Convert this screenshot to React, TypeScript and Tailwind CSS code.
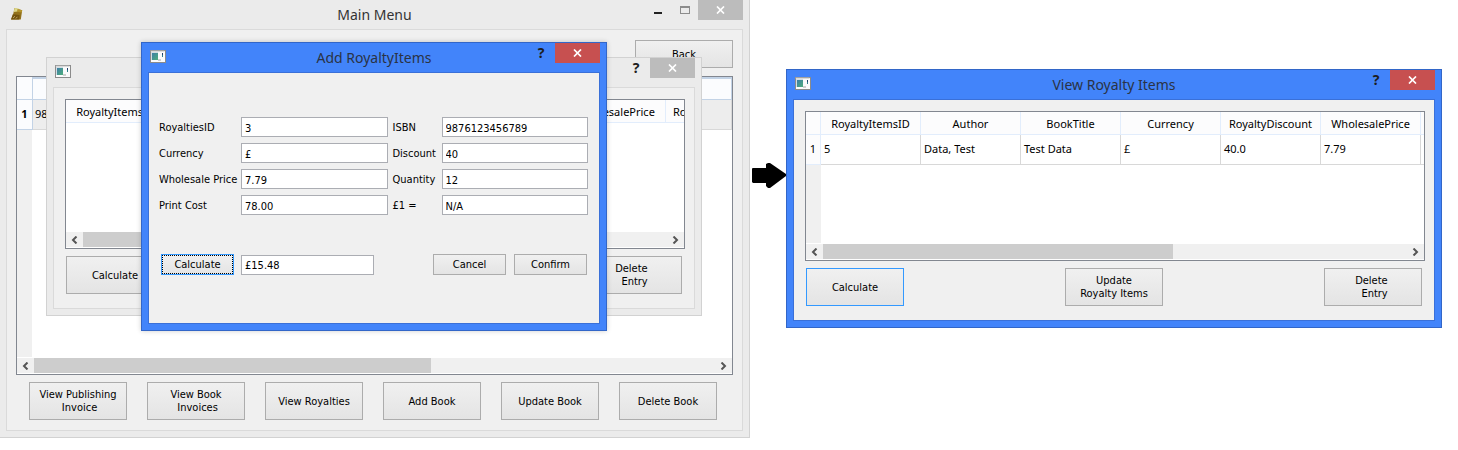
import React, { ReactNode } from 'react';

const COLUMNS = ['RoyaltyItemsID', 'Author', 'BookTitle', 'Currency', 'RoyaltyDiscount', 'WholesalePrice'];

function WindowIcon() {
  return (
    <svg width="16" height="13" viewBox="0 0 16 13" className="shrink-0" aria-hidden="true">
      <defs>
        <linearGradient id="pane" x1="0" y1="0" x2="1" y2="1">
          <stop offset="0" stopColor="#3d7ea6" />
          <stop offset="1" stopColor="#4fae7c" />
        </linearGradient>
      </defs>
      <rect x="0.5" y="0.5" width="15" height="12" fill="#fbfbfb" stroke="#8b8b8b" />
      <rect x="0.5" y="0.5" width="14" height="1" fill="#b9b9b9" />
      <rect x="1" y="2" width="7" height="8" fill="#d3dde4" />
      <rect x="2" y="3" width="6" height="7" fill="url(#pane)" />
      <rect x="8" y="9" width="3" height="2" fill="#d0d0d0" />
      <rect x="12" y="3" width="1" height="4" fill="#2f7f8c" />
      <rect x="12" y="3" width="1" height="2" fill="#23406e" />
    </svg>
  );
}

function AppIcon() {
  return (
    <svg width="14" height="14" viewBox="0 0 14 14" className="shrink-0" aria-hidden="true">
      <path d="M4.5 1 12.2 3.2 10.8 12.6 1 12.6 3 8Z" fill="#93721c" />
      <path d="M4.6 1 9 1.4 7.5 4.5 3.6 5Z" fill="#dcd88a" />
      <path d="M7.5 2 12.2 3.2 11.8 5.5 7 4.8Z" fill="#b4942c" />
      <path d="M2.8 7.2 9.6 8 9.2 12.6 1 12.6Z" fill="#74540f" />
      <path d="M3 11 5 9.2M5.8 11.6 7.4 9.8" stroke="#cdb878" strokeWidth="0.8" />
    </svg>
  );
}

function Cross() {
  return (
    <svg width="9" height="8" viewBox="0 0 9 8" aria-hidden="true">
      <path d="M1 0.5 8 7.5M8 0.5 1 7.5" stroke="#fff" strokeWidth="1.7" />
    </svg>
  );
}

function CloseButton({ active }: { active: boolean }) {
  return (
    <button
      aria-label="Close"
      className={`flex h-5 w-[45px] items-center justify-center ${active ? 'bg-[#c75050]' : 'bg-[#bcbcbc]'}`}
    >
      <Cross />
    </button>
  );
}

function DialogWindow({ title, active, children }: { title: string; active: boolean; children: ReactNode }) {
  return (
    <section
      className={`flex h-full flex-col border px-[6px] pb-[6px] ${
        active ? 'border-[#3266c8] bg-[#4284fa]' : 'border-[#d2d2d2] bg-[#ebebeb]'
      }`}
    >
      <header className="relative flex h-[29px] items-start justify-between pl-[2px]">
        <div className="pt-[7px]">
          <WindowIcon />
        </div>
        <h2 className="absolute inset-x-0 top-[5px] text-center font-['Noto_Sans',sans-serif] text-[14px] leading-5 text-[#2a3345]">
          {title}
        </h2>
        <div className="relative flex">
          <button
            aria-label="Help"
            className="h-5 w-7 font-['Noto_Sans',sans-serif] text-[14px] leading-5 font-bold text-[#1d1d1d]"
          >
            ?
          </button>
          <CloseButton active={active} />
        </div>
      </header>
      <div
        className={`flex min-h-0 flex-1 flex-col border bg-[#f0f0f0] ${
          active ? 'border-[#3a70d8]' : 'border-[#dadada]'
        }`}
      >
        {children}
      </div>
    </section>
  );
}

function PushButton({ children, focused = false }: { children: ReactNode; focused?: boolean }) {
  return (
    <button
      className={`flex h-[38px] w-[98px] shrink-0 items-center justify-center border bg-linear-to-b from-[#f0f0f0] to-[#e4e4e4] text-center text-[11px] leading-[13px] whitespace-pre ${
        focused ? 'border-[#3399ff]' : 'border-[#acacac]'
      }`}
    >
      {children}
    </button>
  );
}

function SmallButton({ children, focused = false }: { children: ReactNode; focused?: boolean }) {
  return (
    <button
      className={`h-[21px] w-[73px] shrink-0 border bg-linear-to-b from-[#f0f0f0] to-[#e4e4e4] pt-px text-[11px] leading-4 ${
        focused ? 'border-[#3399ff] outline-1 -outline-offset-2 outline-dotted outline-black' : 'border-[#acacac]'
      }`}
    >
      {children}
    </button>
  );
}

function Chevron({ right = false }: { right?: boolean }) {
  return (
    <svg width="7" height="8" viewBox="0 0 7 8" aria-hidden="true">
      <path d={right ? 'M1.5 0.5 5 4 1.5 7.5' : 'M5.5 0.5 2 4 5.5 7.5'} fill="none" stroke="#555" strokeWidth="2" />
    </svg>
  );
}

function ScrollBar({ thumb }: { thumb: 'w-3/5' | 'w-7/12' }) {
  return (
    <div className="mb-px flex h-[15px] shrink-0 bg-[#f0f0f0]">
      <button aria-label="Scroll left" className="flex w-[17px] items-center justify-center">
        <Chevron />
      </button>
      <div className="flex flex-1">
        <div className={`${thumb} bg-[#cdcdcd]`} />
      </div>
      <button aria-label="Scroll right" className="flex w-[17px] items-center justify-center">
        <Chevron right />
      </button>
    </div>
  );
}

function RoyaltyTable({ row }: { row?: string[] }) {
  return (
    <div className="flex h-[150px] flex-col border border-[#828790] bg-white font-['Noto_Sans',sans-serif] text-[11px]">
      <div
        className={`mb-px flex min-h-0 flex-1 overflow-hidden ${
          row ? 'bg-linear-to-r from-[#f0f0f0] from-[15px] to-white to-[15px]' : ''
        }`}
      >
        <table className="w-[716px] shrink-0 table-fixed border-separate border-spacing-0 self-start">
          <thead>
            <tr className="h-[23px]">
              {row && <th className="w-[15px] border-r border-b border-[#e2edfc] bg-[#fcfcfd]" />}
              {COLUMNS.map((name) => (
                <th
                  key={name}
                  className="w-[100px] border-r border-b border-[#e2edfc] bg-[#fcfcfd] p-0 pt-px text-center leading-4 font-normal"
                >
                  {name}
                </th>
              ))}
              <th className="border-b border-[#e2edfc] bg-[#fcfcfd] p-0 pt-px pl-[7px] text-left leading-4 font-normal">
                {row ? '' : 'Ro'}
              </th>
            </tr>
          </thead>
          {row && (
            <tbody>
              <tr className="h-[30px]">
                <th className="border-r border-b border-[#e2edfc] bg-[#fcfcfd] p-0 text-center font-normal">1</th>
                {row.map((cell) => (
                  <td key={cell} className="border-r border-b border-[#d8d8d8] bg-white p-0 pl-[3px]">
                    {cell}
                  </td>
                ))}
                <td className="border-b border-[#d8d8d8] bg-white" />
              </tr>
            </tbody>
          )}
        </table>
      </div>
      <ScrollBar thumb="w-3/5" />
    </div>
  );
}

function RoyaltyItemsWindow({ title, active, row }: { title: string; active: boolean; row?: string[] }) {
  return (
    <DialogWindow title={title} active={active}>
      <div className="pt-[11px] pr-[9px] pb-[7px] pl-[11px]">
        <RoyaltyTable row={row} />
      </div>
      <div className="flex justify-between pr-3 pb-[14px] pl-3">
        <PushButton focused={active}>Calculate</PushButton>
        <PushButton>{'Update\nRoyalty Items'}</PushButton>
        <PushButton>{'Delete \n Entry'}</PushButton>
      </div>
    </DialogWindow>
  );
}

const FIELDS = [
  ['RoyaltiesID', '3'],
  ['ISBN', '9876123456789'],
  ['Currency', '£'],
  ['Discount', '40'],
  ['Wholesale Price', '7.79'],
  ['Quantity', '12'],
  ['Print Cost', '78.00'],
  ['£1 =', 'N/A'],
];

const INPUT = 'h-5 min-w-0 border border-[#abadb3] bg-white px-[3px] pt-[2px] text-[11px] leading-4';

function AddRoyaltyItems() {
  return (
    <DialogWindow title="Add RoyaltyItems" active>
      <form className="flex flex-col" onSubmit={(e) => e.preventDefault()}>
        <div className="grid grid-cols-[77px_1fr_44px_1fr] items-center gap-x-[5px] gap-y-[6px] pt-11 pr-[11px] pl-[10px]">
          {FIELDS.map(([label, value]) => (
            <React.Fragment key={label}>
              <label htmlFor={label} className="pt-px text-[11px] leading-4 whitespace-nowrap">
                {label}
              </label>
              <input id={label} defaultValue={value} className={INPUT} />
            </React.Fragment>
          ))}
        </div>
        <div className="flex items-center justify-between pt-[39px] pr-3 pl-3">
          <div className="flex items-center gap-[7px]">
            <SmallButton focused>Calculate</SmallButton>
            <input aria-label="Royalty" defaultValue="£15.48" className={`${INPUT} w-[133px]`} />
          </div>
          <div className="flex gap-2">
            <SmallButton>Cancel</SmallButton>
            <SmallButton>Confirm</SmallButton>
          </div>
        </div>
      </form>
    </DialogWindow>
  );
}

function BooksTable() {
  return (
    <div className="flex h-[299px] flex-col border border-[#828790] bg-white">
      <div className="mb-px flex min-h-0 flex-1 bg-linear-to-r from-[#f0f0f0] from-[15px] to-white to-[15px]">
        <table className="w-full table-fixed border-separate border-spacing-0 self-start font-['Noto_Sans',sans-serif] text-[11px]">
          <thead>
            <tr className="h-[23px]">
              <th className="w-4 border-r border-b border-[#c3d3e6] bg-[#fbfcfe]" />
              <th className="border-t-2 border-r border-b border-[#c3d3e6] bg-[#fbfcfe]" />
            </tr>
          </thead>
          <tbody>
            <tr className="h-[30px]">
              <th className="border-r border-b border-[#c3d3e6] bg-[#fbfcfe] p-0 text-center font-bold">1</th>
              <td className="border-r border-b border-[#d8d8d8] bg-[#ededed] p-0 pl-[2px]">9876123456789</td>
            </tr>
          </tbody>
        </table>
      </div>
      <ScrollBar thumb="w-7/12" />
    </div>
  );
}

const MENU = ['View Publishing\n Invoice', 'View Book\n Invoices', 'View Royalties', 'Add Book', 'Update Book', 'Delete Book'];

function MainWindow() {
  return (
    <section className="relative flex min-w-0 flex-col border-r border-b border-[#d2d2d2] bg-[#ebebeb] pr-[6px] pb-[6px] pl-[6px]">
      <header className="relative flex h-[29px] items-start justify-between pl-1">
        <div className="pt-[7px]">
          <AppIcon />
        </div>
        <h1 className="absolute inset-x-0 top-[5px] text-center font-['Noto_Sans',sans-serif] text-[14px] leading-5 text-[#333]">
          Main Menu
        </h1>
        <div className="relative flex">
          <button aria-label="Minimize" className="flex h-5 w-[27px] items-center justify-center">
            <span className="mt-[5px] h-[2px] w-2 bg-[#222]" />
          </button>
          <button aria-label="Maximize" className="flex h-5 w-[27px] items-center justify-center">
            <span className="h-2 w-[10px] border border-t-2 border-[#8c8c8c]" />
          </button>
          <CloseButton active={false} />
        </div>
      </header>
      <div className="flex flex-col border border-[#dadada] bg-[#f0f0f0] pr-[9px] pb-[10px] pl-[9px]">
        <div className="flex justify-end pt-[10px] pb-2">
          <button className="h-7 w-[98px] border border-[#acacac] bg-linear-to-b from-[#f0f0f0] to-[#e4e4e4] text-[11px] leading-[13px]">
            Back
          </button>
        </div>
        <BooksTable />
        <div className="flex justify-center gap-5 pt-[7px] pr-[3px]">
          {MENU.map((label) => (
            <PushButton key={label}>{label}</PushButton>
          ))}
        </div>
      </div>

      <div className="absolute top-[57px] left-[46px] h-[259px] w-[656px]">
        <RoyaltyItemsWindow title="" active={false} />
      </div>
      <div className="absolute top-[42px] left-[141px] h-[289px] w-[466px] shadow-[0_0_5px_rgba(0,0,0,0.2)]">
        <AddRoyaltyItems />
      </div>
    </section>
  );
}

export default function App() {
  return (
    <main className="grid grid-cols-[minmax(0,750fr)_36px_minmax(0,656fr)] items-start bg-white pr-4 font-['DejaVu_Sans_Condensed','DejaVu_Sans',sans-serif] text-[11px] text-black">
      <MainWindow />
      <div className="flex justify-end pt-[162px]">
        <svg width="34" height="26" viewBox="0 0 34 26" aria-hidden="true">
          <path d="M0 6.5 1 6H14V2L16 1H18L34 12V14L18 26H16L14 24V21H1L0 20Z" fill="#000" />
        </svg>
      </div>
      <div className="flex min-w-0 flex-col pt-[69px]">
        <RoyaltyItemsWindow
          title="View Royalty Items"
          active
          row={['5', 'Data, Test', 'Test Data', '£', '40.0', '7.79']}
        />
      </div>
    </main>
  );
}
